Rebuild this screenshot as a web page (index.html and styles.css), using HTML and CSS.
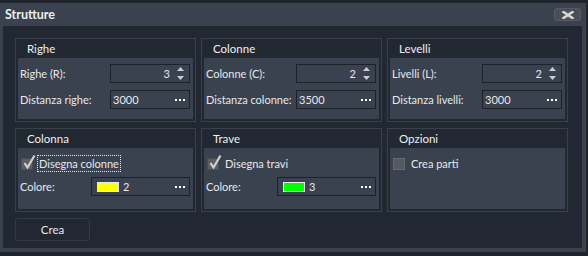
FILE: index.html
```html
<!DOCTYPE html>
<html lang="it">

<head>
    <meta charset="UTF-8">
    <title>Strutture</title>
    <link rel="stylesheet" href="styles.css">
</head>

<body>
    <div class="window">
        <div class="titlebar">
            <span class="title">Strutture</span>
            <button class="close-btn" title="Chiudi">
                <svg width="12" height="8" viewBox="0 0 12 8">
                    <path d="M1.5 1 L10.5 7 M10.5 1 L1.5 7" stroke="#d6d6d6" stroke-width="2.6" stroke-linecap="square" />
                </svg>
            </button>
        </div>

        <div class="dialog-body">
            <div class="groups">
                <!-- riga 1 -->
                <div class="group">
                    <div class="group-title">Righe</div>
                    <div class="group-content">
                        <div class="field-row">
                            <label>Righe (R):</label>
                            <div class="input-box spin">
                                <span class="value">3</span>
                                <svg class="spinner" width="9" height="15" viewBox="0 0 9 15">
                                    <path d="M4.5 1 L8 5 L1 5 Z M1 10 L8 10 L4.5 14 Z" fill="#c9ccd1" />
                                </svg>
                            </div>
                        </div>
                        <div class="field-row">
                            <label>Distanza righe:</label>
                            <div class="input-box">
                                <span class="text">3000</span>
                                <svg class="dots" width="10" height="2" viewBox="0 0 10 2">
                                    <rect x="0" y="0" width="2" height="2" fill="#fff" />
                                    <rect x="4" y="0" width="2" height="2" fill="#fff" />
                                    <rect x="8" y="0" width="2" height="2" fill="#fff" />
                                </svg>
                            </div>
                        </div>
                    </div>
                </div>

                <div class="group">
                    <div class="group-title">Colonne</div>
                    <div class="group-content">
                        <div class="field-row">
                            <label>Colonne (C):</label>
                            <div class="input-box spin">
                                <span class="value">2</span>
                                <svg class="spinner" width="9" height="15" viewBox="0 0 9 15">
                                    <path d="M4.5 1 L8 5 L1 5 Z M1 10 L8 10 L4.5 14 Z" fill="#c9ccd1" />
                                </svg>
                            </div>
                        </div>
                        <div class="field-row">
                            <label>Distanza colonne:</label>
                            <div class="input-box">
                                <span class="text">3500</span>
                                <svg class="dots" width="10" height="2" viewBox="0 0 10 2">
                                    <rect x="0" y="0" width="2" height="2" fill="#fff" />
                                    <rect x="4" y="0" width="2" height="2" fill="#fff" />
                                    <rect x="8" y="0" width="2" height="2" fill="#fff" />
                                </svg>
                            </div>
                        </div>
                    </div>
                </div>

                <div class="group">
                    <div class="group-title">Levelli</div>
                    <div class="group-content">
                        <div class="field-row">
                            <label>Livelli (L):</label>
                            <div class="input-box spin">
                                <span class="value">2</span>
                                <svg class="spinner" width="9" height="15" viewBox="0 0 9 15">
                                    <path d="M4.5 1 L8 5 L1 5 Z M1 10 L8 10 L4.5 14 Z" fill="#c9ccd1" />
                                </svg>
                            </div>
                        </div>
                        <div class="field-row">
                            <label>Distanza livelli:</label>
                            <div class="input-box">
                                <span class="text">3000</span>
                                <svg class="dots" width="10" height="2" viewBox="0 0 10 2">
                                    <rect x="0" y="0" width="2" height="2" fill="#fff" />
                                    <rect x="4" y="0" width="2" height="2" fill="#fff" />
                                    <rect x="8" y="0" width="2" height="2" fill="#fff" />
                                </svg>
                            </div>
                        </div>
                    </div>
                </div>

                <!-- riga 2 -->
                <div class="group">
                    <div class="group-title">Colonna</div>
                    <div class="group-content options">
                        <div class="check-row">
                            <span class="checkbox checked">
                                <svg width="14" height="16" viewBox="0 0 14 16">
                                    <path d="M2.5 9 L5.5 13.5 L12.5 1.5" fill="none" stroke="#cfd1d4" stroke-width="2.2" />
                                </svg>
                            </span>
                            <span class="check-label focused">Disegna colonne</span>
                        </div>
                        <div class="color-row">
                            <label>Colore:</label>
                            <div class="input-box color">
                                <span class="swatch yellow"></span>
                                <span class="text">2</span>
                                <svg class="dots" width="10" height="2" viewBox="0 0 10 2">
                                    <rect x="0" y="0" width="2" height="2" fill="#fff" />
                                    <rect x="4" y="0" width="2" height="2" fill="#fff" />
                                    <rect x="8" y="0" width="2" height="2" fill="#fff" />
                                </svg>
                            </div>
                        </div>
                    </div>
                </div>

                <div class="group">
                    <div class="group-title">Trave</div>
                    <div class="group-content options">
                        <div class="check-row">
                            <span class="checkbox checked">
                                <svg width="14" height="16" viewBox="0 0 14 16">
                                    <path d="M2.5 9 L5.5 13.5 L12.5 1.5" fill="none" stroke="#cfd1d4" stroke-width="2.2" />
                                </svg>
                            </span>
                            <span class="check-label">Disegna travi</span>
                        </div>
                        <div class="color-row">
                            <label>Colore:</label>
                            <div class="input-box color">
                                <span class="swatch green"></span>
                                <span class="text">3</span>
                                <svg class="dots" width="10" height="2" viewBox="0 0 10 2">
                                    <rect x="0" y="0" width="2" height="2" fill="#fff" />
                                    <rect x="4" y="0" width="2" height="2" fill="#fff" />
                                    <rect x="8" y="0" width="2" height="2" fill="#fff" />
                                </svg>
                            </div>
                        </div>
                    </div>
                </div>

                <div class="group">
                    <div class="group-title">Opzioni</div>
                    <div class="group-content options">
                        <div class="check-row">
                            <span class="checkbox"></span>
                            <span class="check-label">Crea parti</span>
                        </div>
                    </div>
                </div>
            </div>

            <button class="crea-btn">Crea</button>
        </div>
    </div>
</body>

</html>
```

FILE: styles.css
```css
* {
    box-sizing: border-box;
    margin: 0;
    padding: 0;
}

body {
    font-family: Lato, 'Noto Sans', sans-serif;
    font-size: 11px;
    background-color: #1f242b;
    color: #e6e8eb;
}

.window {
    margin-top: 3px;
    width: 586px;
    height: 249px;
    background-color: #3a4250;
    padding: 0 4px 4px 3px;
    display: flex;
    flex-direction: column;
}

.titlebar {
    height: 23px;
    display: flex;
    align-items: center;
    justify-content: space-between;
    padding: 0 1px 0 2px;
}

.title {
    font-size: 12.5px;
    font-weight: bold;
    color: #eceef0;
}

.close-btn {
    width: 27px;
    height: 13px;
    border: 1px solid #575b62;
    border-radius: 3px;
    background-color: #4a4e55;
    display: flex;
    align-items: center;
    justify-content: center;
}

.dialog-body {
    flex: 1;
    background-color: #222831;
    padding: 12px 14px 7px 12px;
}

.groups {
    display: grid;
    grid-template-columns: repeat(3, 181px);
    column-gap: 5px;
    row-gap: 6px;
}

.group {
    height: 84px;
    border: 1px solid #39404b;
    padding: 0 2px 2px 2px;
    display: flex;
    flex-direction: column;
}

.group-title {
    height: 19px;
    line-height: 19px;
    padding-left: 9px;
    font-size: 11.5px;
    color: #eef0f2;
}

.group-content {
    flex: 1;
    background-color: #3a4250;
    padding: 6px 3px 0 2px;
    display: flex;
    flex-direction: column;
    gap: 7px;
}

.group-content.options {
    padding-top: 7px;
    gap: 5px;
}

.field-row {
    display: grid;
    grid-template-columns: 90px 80px;
    align-items: center;
    height: 19px;
}

.color-row {
    display: grid;
    grid-template-columns: 71px 99px;
    align-items: center;
    height: 19px;
}

label {
    white-space: nowrap;
}

.input-box {
    height: 19px;
    border: 1px solid #1d2229;
    display: flex;
    align-items: center;
    padding: 0 3px 0 2px;
}

.input-box .text {
    flex: 1;
}

.input-box.spin .value {
    flex: 1;
    text-align: right;
    padding-right: 6px;
}

.spinner {
    margin-right: 1px;
}

.dots {
    margin-right: 1px;
}

.input-box.color {
    padding-left: 5px;
}

.swatch {
    width: 22px;
    height: 10px;
    border: 1px solid #e8e8e8;
    margin-right: 4px;
}

.swatch.yellow {
    background-color: #ffff00;
}

.swatch.green {
    background-color: #00ff00;
}

.check-row {
    display: flex;
    align-items: center;
    height: 17px;
    padding-left: 1px;
}

.checkbox {
    position: relative;
    width: 12px;
    height: 12px;
    border: 1px solid #666a70;
    background-color: #55595f;
    margin-right: 4px;
}

.checkbox.checked {
    background-color: #5c5e62;
    border-color: #4a4d52;
}

.checkbox svg {
    position: absolute;
    left: 0;
    top: -5px;
}

.check-label {
    line-height: 15px;
    padding: 0 1px;
    border: 1px solid transparent;
}

.check-label.focused {
    border: 1px dotted #e6e8eb;
}

.crea-btn {
    margin-top: 6px;
    width: 75px;
    height: 23px;
    font-family: inherit;
    font-size: 11.5px;
    color: #e6e8eb;
    background-color: #222831;
    border: 1px solid #343a44;
    border-radius: 3px;
}
```
